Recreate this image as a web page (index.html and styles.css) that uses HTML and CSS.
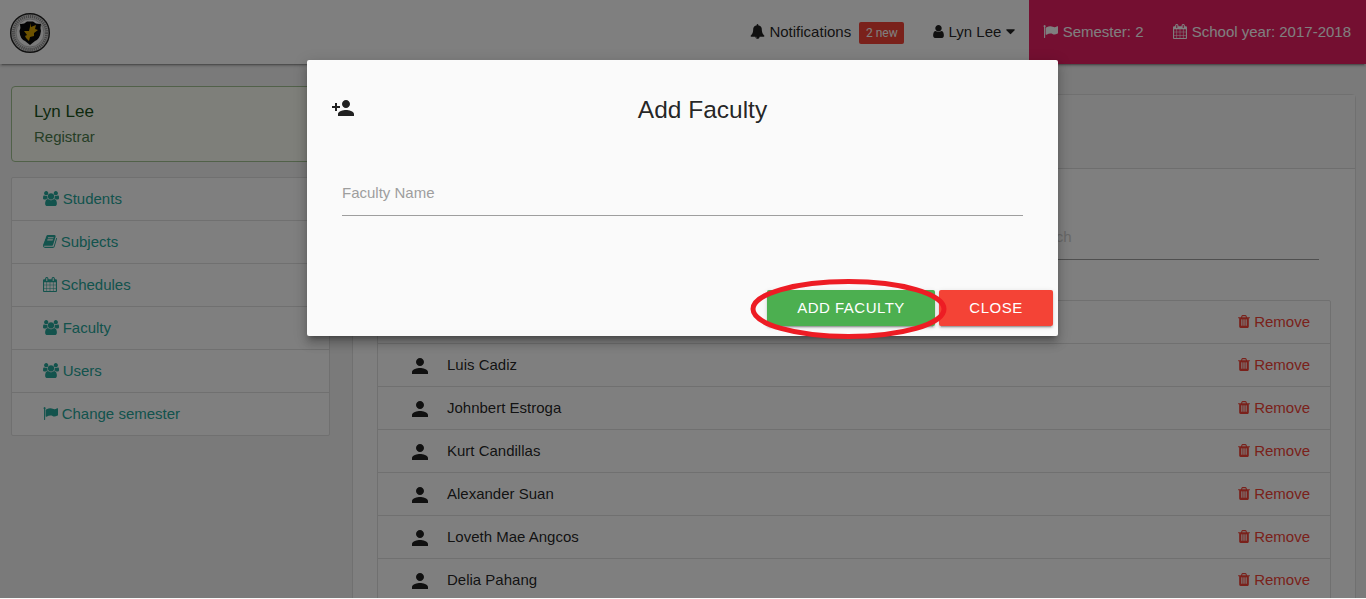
FILE: index.html
```html
<!DOCTYPE html>
<html lang="en">
<head>
<meta charset="utf-8">
<title>Faculty</title>
<link rel="stylesheet" href="styles.css">
</head>
<body>
<svg class="defs" aria-hidden="true">
<symbol id="bell" viewBox="0 0 1792 1792"><path d="M912 1696q0-16-16-16-59 0-101.500-42.500t-42.500-101.500q0-16-16-16t-16 16q0 73 51.500 124.500t124.500 51.500q16 0 16-16zm816-288q0 52-38 90t-90 38h-448q0 106-75 181t-181 75-181-75-75-181h-448q-52 0-90-38t-38-90q50-42 91-88t85-119.500 74.500-158.500 50-206 19.500-260q0-152 117-282.500t307-158.500q-8-19-8-39 0-40 28-68t68-28 68 28 28 68q0 20-8 39 190 28 307 158.500t117 282.500q0 139 19.500 260t50 206 74.500 158.500 85 119.500 91 88z"/></symbol>
<symbol id="user" viewBox="256 0 1280 1792"><path d="M1536 1399q0 109-62.500 187t-150.500 78h-854q-88 0-150.500-78t-62.500-187q0-85 8.500-160.500t31.500-152 58.500-131 94-89 134.500-34.500q131 128 313 128t313-128q76 0 134.500 34.500t94 89 58.500 131 31.500 152 8.500 160.500zm-256-887q0 159-112.500 271.500t-271.500 112.500-271.500-112.500-112.500-271.500 112.500-271.500 271.500-112.500 271.500 112.500 112.500 271.500z"/></symbol>
<symbol id="caret" viewBox="384 0 1024 1792"><path d="M1408 704q0 26-19 45l-448 448q-19 19-45 19t-45-19l-448-448q-19-19-19-45t19-45 45-19h896q26 0 45 19t19 45z"/></symbol>
<symbol id="flag" viewBox="0 0 1792 1792"><path d="M320 256q0 72-64 110v1266q0 13-9.500 22.500t-22.500 9.500h-64q-13 0-22.500-9.500t-9.500-22.500v-1266q-64-38-64-110 0-53 37.500-90.500t90.500-37.500 90.500 37.500 37.500 90.500zm1472 64v763q0 25-12.500 38.500t-39.500 27.500q-215 116-369 116-61 0-123.500-22t-108.500-48-115.500-48-142.500-22q-192 0-464 146-17 9-33 9-26 0-45-19t-19-45v-742q0-32 31-55 21-14 79-43 236-120 421-120 107 0 200 29t219 88q38 19 88 19 54 0 117.500-21t110-47 88-47 54.500-21q26 0 45 19t19 45z"/></symbol>
<symbol id="calendar" viewBox="64 0 1664 1792"><path d="M192 1664h288v-288h-288v288zm352 0h320v-288h-320v288zm-352-352h288v-320h-288v320zm352 0h320v-320h-320v320zm-352-384h288v-288h-288v288zm736 736h320v-288h-320v288zm-384-736h320v-288h-320v288zm768 736h288v-288h-288v288zm-384-352h320v-320h-320v320zm-352-864v-288q0-13-9.500-22.500t-22.500-9.500h-64q-13 0-22.500 9.500t-9.500 22.500v288q0 13 9.500 22.500t22.500 9.500h64q13 0 22.500-9.500t9.500-22.500zm736 864h288v-320h-288v320zm-384-384h320v-288h-320v288zm384 0h288v-288h-288v288zm32-480v-288q0-13-9.500-22.500t-22.500-9.500h-64q-13 0-22.500 9.500t-9.500 22.500v288q0 13 9.500 22.500t22.500 9.500h64q13 0 22.500-9.500t9.500-22.500zm384-64v1280q0 52-38 90t-90 38h-1408q-52 0-90-38t-38-90v-1280q0-52 38-90t90-38h128v-96q0-66 47-113t113-47h64q66 0 113 47t47 113v96h384v-96q0-66 47-113t113-47h64q66 0 113 47t47 113v96h128q52 0 90 38t38 90z"/></symbol>
<symbol id="users" viewBox="64 0 1920 1792"><path d="M657 896q-162 5-265 128h-134q-82 0-138-40.500t-56-118.500q0-353 124-353 6 0 43.500 21t97.500 42.500 119 21.500q67 0 133-23-5 37-5 66 0 159 90 256zm1071 637q0 120-73 189.500t-194 69.500h-874q-121 0-194-69.500t-73-189.500q0-53 3.500-103.500t14-109 26.500-108.500 43-97.500 62-81 85.500-53.500 111.500-20q10 0 43 21.500t73 48 107 48 135 21.500 135-21.500 107-48 73-48 43-21.500q61 0 111.500 20t85.500 53.500 62 81 43 97.500 26.500 108.500 14 109 3.500 103.500zm-1024-1277q0 106-75 181t-181 75-181-75-75-181 75-181 181-75 181 75 75 181zm704 384q0 159-112.500 271.500t-271.500 112.500-271.500-112.500-112.500-271.500 112.500-271.500 271.500-112.500 271.500 112.500 112.500 271.500zm576 225q0 78-56 118.500t-138 40.500h-134q-103-123-265-128 90-97 90-256 0-29-5-66 66 23 133 23 59 0 119-21.500t97.500-42.500 43.500-21q124 0 124 353zm-128-609q0 106-75 181t-181 75-181-75-75-181 75-181 181-75 181 75 75 181z"/></symbol>
<symbol id="book" viewBox="64 0 1664 1792"><path d="M1703 478q40 57 18 129l-275 906q-19 64-76.500 107.500t-122.500 43.500h-923q-77 0-148.500-53.500t-99.500-131.500q-24-67-2-127 0-4 3-27t4-37q1-8-3-21.500t-3-19.500q2-11 8-21t16.500-23.500 16.500-23.500q23-38 45-91.500t30-91.500q3-10 .5-30t-.5-28q3-11 17-28t17-23q21-36 42-92t25-90q1-9-2.500-32t.5-28q4-13 22-30.500t22-22.500q19-26 42.500-84.500t27.500-96.500q1-8-3-25.500t-2-26.500q2-8 9-18t18-23 17-21q8-12 16.500-30.500t15-35 16-36 19.500-32 26.500-23.500 36-11.500 47.500 5.500l-1 3q38-9 51-9h761q74 0 114 56t18 130l-274 906q-36 119-71.500 153.500t-128.500 34.500h-869q-27 0-38 15-11 16-1 43 24 70 144 70h923q29 0 56-15.500t35-41.500l300-987q7-22 5-57 38 15 59 43zm-1064 2q-4 13 2 22.500t20 9.500h608q13 0 25.500-9.500t16.500-22.500l21-64q4-13-2-22.500t-20-9.500h-608q-13 0-25.500 9.500t-16.500 22.500zm-83 256q-4 13 2 22.500t20 9.500h608q13 0 25.500-9.500t16.500-22.500l21-64q4-13-2-22.500t-20-9.500h-608q-13 0-25.500 9.500t-16.500 22.500z"/></symbol>
<symbol id="trash" viewBox="192 0 1408 1792"><path d="M704 1376v-704q0-14-9-23t-23-9h-64q-14 0-23 9t-9 23v704q0 14 9 23t23 9h64q14 0 23-9t9-23zm256 0v-704q0-14-9-23t-23-9h-64q-14 0-23 9t-9 23v704q0 14 9 23t23 9h64q14 0 23-9t9-23zm256 0v-704q0-14-9-23t-23-9h-64q-14 0-23 9t-9 23v704q0 14 9 23t23 9h64q14 0 23-9t9-23zm-544-992h448l-48-117q-7-9-17-11h-317q-10 2-17 11zm928 32v64q0 14-9 23t-23 9h-96v948q0 83-47 143.500t-113 60.500h-832q-66 0-113-58.500t-47-141.500v-952h-96q-14 0-23-9t-9-23v-64q0-14 9-23t23-9h309l70-167q15-37 54-63t79-26h320q40 0 79 26t54 63l70 167h309q14 0 23 9t9 23z"/></symbol>
<symbol id="person" viewBox="0 0 24 24"><path d="M12 12c2.210 0 4-1.790 4-4s-1.790-4-4-4-4 1.790-4 4 1.790 4 4 4zm0 2c-2.670 0-8 1.340-8 4v2h16v-2c0-2.660-5.330-4-8-4z"/></symbol>
</svg>

<div class="page">
<nav class="navbar">
  <svg class="logo" viewBox="0 0 40 40">
    <circle cx="20" cy="20" r="19.300" fill="#d8d8d8" stroke="#222" stroke-width="1.400"/>
    <circle cx="20" cy="20" r="16.600" fill="none" stroke="#8c8c8c" stroke-width="3" stroke-dasharray="1.200 .9"/>
    <circle cx="20" cy="20" r="14" fill="#f4f4f4" stroke="#999" stroke-width=".6"/>
    <path d="M10 11q4 .5 7-2.500h6q3 3 8 2.500-1 4 0 7-1 8-6 10l-5 4-5-4Q10 26 9.500 18q1.500-3 .5-7z" fill="#080808"/>
    <path d="M21 10l0 4 5-2-1 4 3 1-4 3 0 3-4 1-1 4-3-3-1-2 2-1-3-4 5 0z" fill="#d9a400"/>
  </svg>
  <ul class="nav-items">
    <li><svg class="fa w15"><use href="#bell"/></svg> Notifications <span class="badge">2 new</span></li>
    <li class="account"><svg class="fa w11"><use href="#user"/></svg> Lyn Lee <svg class="fa w9"><use href="#caret"/></svg></li>
    <li class="pink"><svg class="fa w15"><use href="#flag"/></svg> Semester: 2</li>
    <li class="pink"><svg class="fa w14"><use href="#calendar"/></svg> School year: 2017-2018</li>
  </ul>
</nav>
<div class="columns">
  <aside class="sidebar">
    <div class="profile"><div class="profile-name">Lyn Lee</div><div class="profile-role">Registrar</div></div>
    <ul class="menu">
      <li><svg class="fa w16"><use href="#users"/></svg> Students</li>
      <li><svg class="fa w14"><use href="#book"/></svg> Subjects</li>
      <li><svg class="fa w14"><use href="#calendar"/></svg> Schedules</li>
      <li><svg class="fa w16"><use href="#users"/></svg> Faculty</li>
      <li><svg class="fa w16"><use href="#users"/></svg> Users</li>
      <li><svg class="fa w15"><use href="#flag"/></svg> Change semester</li>
    </ul>
  </aside>
  <main class="card">
    <div class="card-head"></div>
    <div class="card-body">
      <div class="search">Search</div>
      <ul class="people">
        <li><svg class="person"><use href="#person"/></svg><span class="name"></span><span class="remove"><svg class="fa w12"><use href="#trash"/></svg> Remove</span></li>
        <li><svg class="person"><use href="#person"/></svg><span class="name">Luis Cadiz</span><span class="remove"><svg class="fa w12"><use href="#trash"/></svg> Remove</span></li>
        <li><svg class="person"><use href="#person"/></svg><span class="name">Johnbert Estroga</span><span class="remove"><svg class="fa w12"><use href="#trash"/></svg> Remove</span></li>
        <li><svg class="person"><use href="#person"/></svg><span class="name">Kurt Candillas</span><span class="remove"><svg class="fa w12"><use href="#trash"/></svg> Remove</span></li>
        <li><svg class="person"><use href="#person"/></svg><span class="name">Alexander Suan</span><span class="remove"><svg class="fa w12"><use href="#trash"/></svg> Remove</span></li>
        <li><svg class="person"><use href="#person"/></svg><span class="name">Loveth Mae Angcos</span><span class="remove"><svg class="fa w12"><use href="#trash"/></svg> Remove</span></li>
        <li><svg class="person"><use href="#person"/></svg><span class="name">Delia Pahang</span><span class="remove"><svg class="fa w12"><use href="#trash"/></svg> Remove</span></li>
      </ul>
    </div>
  </main>
</div>
</div>

<div class="overlay"></div>
<section class="modal">
  <header class="modal-head">
    <svg class="person-add" viewBox="0 0 24 24"><path d="M15 12c2.210 0 4-1.790 4-4s-1.790-4-4-4-4 1.790-4 4 1.790 4 4 4zm-9-2V7H4v3H1v2h3v3h2v-3h3v-2H6zm9 4c-2.670 0-8 1.340-8 4v2h16v-2c0-2.660-5.330-4-8-4z"/></svg>
    <h5 class="modal-title">Add Faculty</h5>
  </header>
  <div class="field">Faculty Name</div>
  <footer class="modal-foot"><button class="btn green">ADD FACULTY</button><button class="btn red">CLOSE</button></footer>
</section>
<svg class="highlight" viewBox="0 0 198 62"><ellipse cx="98.500" cy="31" rx="95.500" ry="27.500"/></svg>
</body>
</html>
```

FILE: styles.css
```css
* { box-sizing: border-box; }
body {
  margin: 0;
  height: 599px;
  overflow: hidden;
  position: relative;
  background: #fafafa;
  color: rgba(0, 0, 0, .87);
  font: 15px/22px "Liberation Sans", Arial, sans-serif;
}
ul { margin: 0; padding: 0; list-style: none; }
.defs { position: absolute; width: 0; height: 0; }
.page { height: 598px; overflow: hidden; background: #f5f5f5; }

.fa { height: 15px; fill: currentColor; vertical-align: -2px; }
.w9 { width: 9px; }
.w11 { width: 11px; }
.w12 { width: 12px; }
.w14 { width: 14px; }
.w15 { width: 15px; }
.w16 { width: 16px; }

.navbar {
  display: flex;
  justify-content: space-between;
  height: 64px;
  background: #fff;
  box-shadow: 0 2px 2px 0 rgba(0, 0, 0, .14), 0 1px 5px 0 rgba(0, 0, 0, .12), 0 3px 1px -2px rgba(0, 0, 0, .2);
}
.logo { width: 40px; height: 40px; margin: 13px 0 0 10px; }
.nav-items { display: flex; line-height: 64px; white-space: nowrap; }
.nav-items li { padding: 0 15px; }
.nav-items .account { padding: 0 14px; }
.pink { background: #e91e63; color: #fff; }
.pink .fa { margin-left: -1px; margin-right: 1px; }
.badge {
  display: inline-block;
  width: 45px;
  height: 22px;
  margin-left: 4px;
  border-radius: 2px;
  background: #f44336;
  color: #fff;
  font: 12px/22px Roboto, sans-serif;
  text-align: center;
  vertical-align: 0;
}

.columns { display: flex; gap: 22px; padding: 22px 10px 0 11px; }
.sidebar { width: 319px; }
.profile {
  height: 76px;
  padding: 14px 22px;
  border: 1px solid #a3c293;
  border-radius: 4px;
  background: #fcfff5;
  color: #2c662d;
}
.profile-name { margin-bottom: 3px; color: #1a531b; font-size: 17px; }
.profile-role { opacity: .85; }
.menu { margin-top: 15px; border: 1px solid #e0e0e0; border-radius: 2px; background: #fff; color: #26a69a; }
.menu li { height: 43px; padding: 10px 30.5px; border-bottom: 1px solid #e0e0e0; }
.menu li:last-child { height: 42px; border-bottom: 0; }

.card { flex: 1; margin-top: 8px; height: 700px; border: 1px solid #e0e0e0; border-radius: 4px; background: #fff; }
.card-head { height: 74px; border-bottom: 1px solid #dcdcdc; background: #f8f8f8; }
.card-body { padding: 45px 24px 0; }
.search { width: 295px; height: 46px; margin: 0 12px 40px auto; padding-top: 12px; border-bottom: 1px solid #9e9e9e; color: #d1d1d1; }
.people { border: 1px solid #e0e0e0; border-radius: 2px; }
.people li { display: flex; align-items: center; height: 43px; padding: 0 20px 0 30px; border-bottom: 1px solid #e0e0e0; }
.person { width: 24px; height: 24px; margin-top: 2px; fill: #212121; }
.name { flex: 1; margin-left: 15px; }
.remove { color: #f44336; }

.overlay { position: absolute; top: 0; left: 0; width: 100%; height: 598px; background: rgba(0, 0, 0, .5); }
.modal {
  position: absolute;
  top: 60px;
  left: 307px;
  width: 751px;
  height: 276px;
  padding: 24px 5px 10px 24px;
  border-radius: 2px;
  background: #fafafa;
  box-shadow: 0 8px 10px 1px rgba(0, 0, 0, .14), 0 3px 14px 2px rgba(0, 0, 0, .12), 0 5px 5px -3px rgba(0, 0, 0, .3);
}
.modal-head { display: flex; padding: 12px 19px 0 0; }
.person-add { width: 24px; height: 24px; fill: #212121; }
.modal-title { flex: 1; margin: 0 0 0 16px; font-size: 24.5px; font-weight: 400; line-height: 27px; text-align: center; }
.field { width: 681px; height: 44px; margin: 49px 0 0 11px; padding-top: 10px; border-bottom: 1px solid #9e9e9e; color: #9e9e9e; }
.modal-foot { display: flex; justify-content: flex-end; gap: 4px; margin-top: 74px; }
.btn {
  height: 36px;
  padding: 0;
  border: 0;
  border-radius: 2px;
  color: #fff;
  font: 15px/36px "Liberation Sans", Arial, sans-serif;
  letter-spacing: .5px;
  box-shadow: 0 2px 2px 0 rgba(0, 0, 0, .14), 0 1px 5px 0 rgba(0, 0, 0, .12), 0 3px 1px -2px rgba(0, 0, 0, .2);
}
.green { width: 168px; background: #4caf50; }
.red { width: 114px; background: #f44336; }
.highlight { position: absolute; left: 750px; top: 278px; width: 198px; height: 62px; fill: none; stroke: #ed1c24; stroke-width: 5; }
```
